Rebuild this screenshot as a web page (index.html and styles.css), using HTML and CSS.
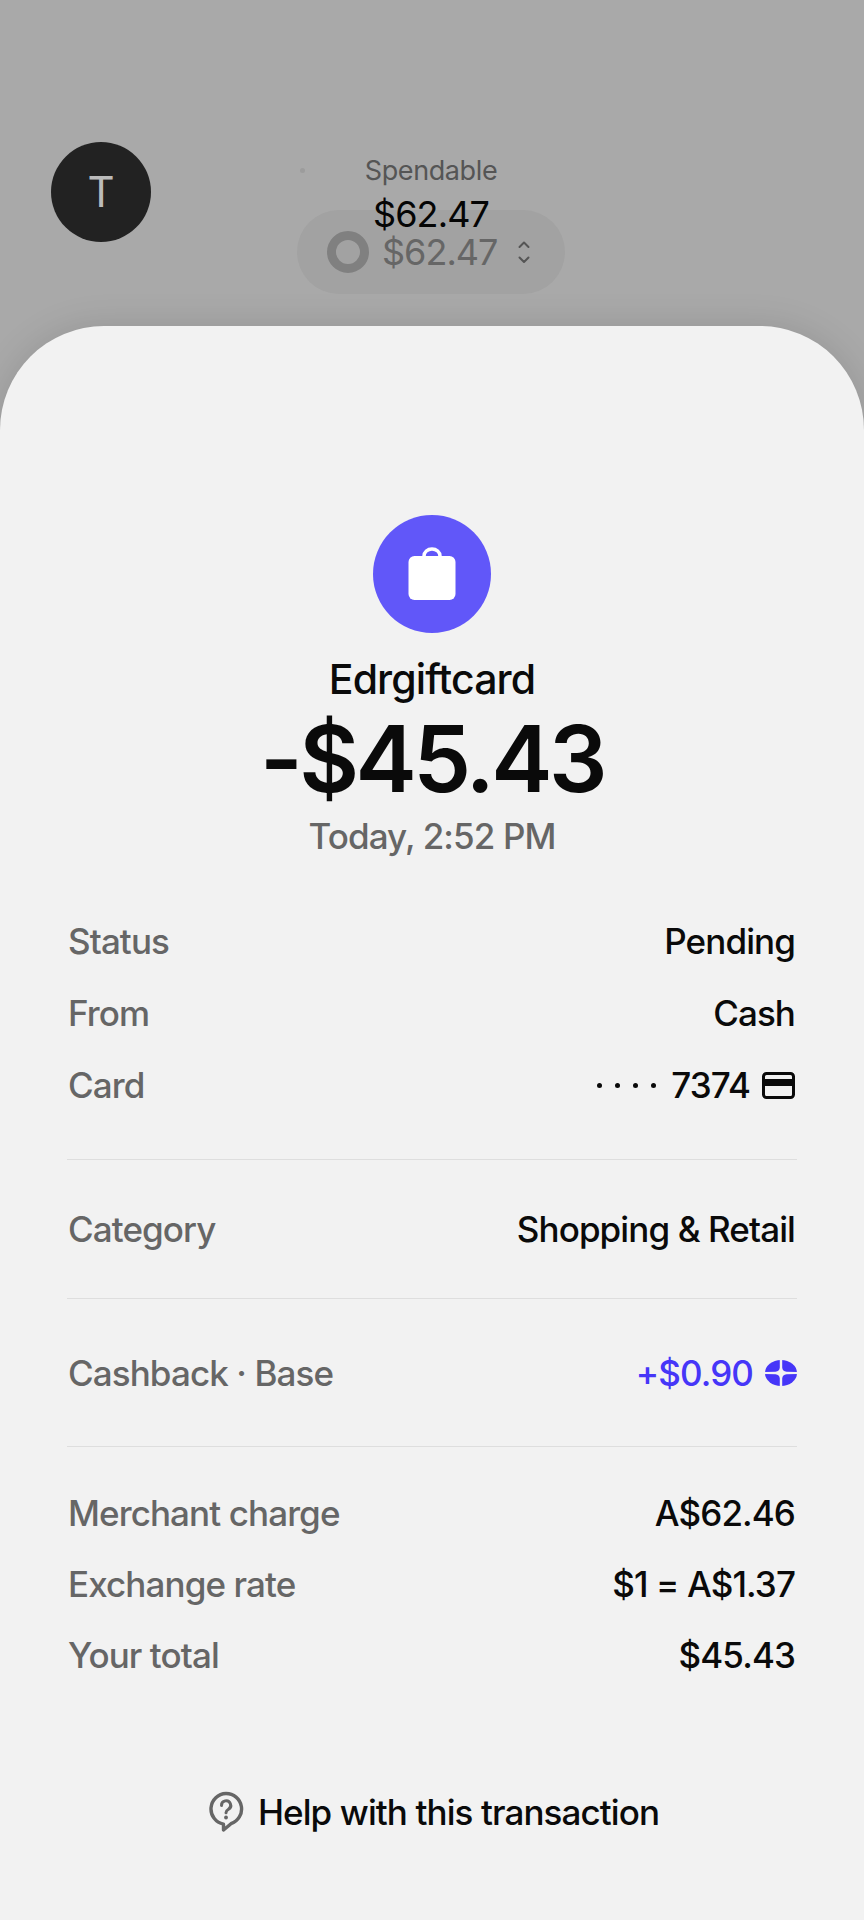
FILE: index.html
```html
<!DOCTYPE html>
<html lang="en">
  <head>
    <meta charset="UTF-8" />
    <meta name="viewport" content="width=device-width, initial-scale=1.0" />
    <title>Transaction</title>
    <link rel="stylesheet" href="styles.css">
  </head>
  <body>
    <header class="top">
      <div class="avatar">T</div>
      <div class="balance">
        <span class="speck"></span>
        <div class="balance-label">Spendable</div>
        <div class="balance-value">$62.47</div>
        <div class="pill">
          <span class="ring"></span>
          <span class="pill-value">$62.47</span>
          <svg class="chevrons" viewBox="0 0 12 24" fill="none" stroke="#555" stroke-width="2" stroke-linecap="round" stroke-linejoin="round">
            <path d="M1.5 7 6 2.5 10.5 7" />
            <path d="M1.5 17.5 6 22 10.5 17.5" />
          </svg>
        </div>
      </div>
    </header>

    <main class="sheet">
      <section class="hero">
        <div class="merchant-icon">
          <svg width="48" height="54" viewBox="0 0 48 54">
            <path fill="none" stroke="#fff" stroke-width="3.5" d="M16 10V9a8 7 0 0 1 16 0v1" />
            <rect x="0.5" y="9" width="47" height="44" rx="6" fill="#fff" />
          </svg>
        </div>
        <div class="merchant">Edrgiftcard</div>
        <div class="amount">-$45.43</div>
        <div class="when">Today, 2:52 PM</div>
      </section>

      <section class="group group-a">
        <div class="row"><span class="label">Status</span><span class="value">Pending</span></div>
        <div class="row"><span class="label">From</span><span class="value">Cash</span></div>
        <div class="row">
          <span class="label">Card</span>
          <span class="value card-value">
            <span class="dots"><i></i><i></i><i></i><i></i></span>
            <span>7374</span>
            <svg width="33" height="27" viewBox="0 0 33 27">
              <rect x="1.5" y="1.5" width="30" height="24" rx="3" fill="none" stroke="#0a0a0a" stroke-width="3" />
              <rect x="2" y="7" width="29" height="7" fill="#0a0a0a" />
            </svg>
          </span>
        </div>
      </section>

      <section class="group group-b">
        <div class="row"><span class="label">Category</span><span class="value">Shopping &amp; Retail</span></div>
      </section>

      <section class="group group-c">
        <div class="row">
          <span class="label">Cashback · Base</span>
          <span class="value cashback">
            <span>+$0.90</span>
            <svg width="32" height="26" viewBox="0 0 32 26">
              <ellipse cx="16" cy="13" rx="16" ry="13" fill="#4636f8" />
              <path fill="#f2f2f2" d="M14.800 0h2.400v7.500q.3 3.800 4.300 4.300l10.500.1v2.200l-10.500.1q-4 .5-4.300 4.300V26h-2.400v-7.500q-.3-3.800-4.300-4.300L0 14.100v-2.200l10.500-.1q4-.5 4.300-4.300z" />
            </svg>
          </span>
        </div>
      </section>

      <section class="group group-d">
        <div class="row"><span class="label">Merchant charge</span><span class="value">A$62.46</span></div>
        <div class="row"><span class="label">Exchange rate</span><span class="value">$1 = A$1.37</span></div>
        <div class="row"><span class="label">Your total</span><span class="value">$45.43</span></div>
      </section>

      <div class="help">
        <svg width="36" height="42" viewBox="0 0 36 42" fill="none">
          <path stroke="#666" stroke-width="3.4" stroke-linejoin="round" d="M18 2.500a15.500 15.500 0 0 1 5 30.200L15.500 39v-5.800A15.500 15.500 0 0 1 18 2.500z" />
          <path stroke="#666" stroke-width="3" stroke-linecap="round" d="M13.500 14.500a4.600 4.600 0 1 1 7 3.800c-1.600 1-2.500 1.900-2.500 3.400" />
          <circle cx="18" cy="26.500" r="1.900" fill="#666" />
        </svg>
        <span>Help with this transaction</span>
      </div>
    </main>
  </body>
</html>
```

FILE: styles.css
```css
* {
  box-sizing: border-box;
}
html,
body {
  margin: 0;
  padding: 0;
}
body {
  width: 864px;
  height: 1920px;
  overflow: hidden;
  background-color: #a9a9a9;
  font-family: Inter, "Liberation Sans", sans-serif;
  color: #0a0a0a;
}

/* dimmed header behind the sheet */
.top {
  height: 326px;
  padding: 142px 0 0 51px;
  display: grid;
  grid-template-columns: 246px 268px 1fr;
  align-items: start;
}
.avatar {
  width: 100px;
  height: 100px;
  border-radius: 50%;
  background-color: #222;
  color: #bbb;
  font-size: 42px;
  line-height: 100px;
  text-align: center;
}
.balance {
  position: relative;
  display: flex;
  flex-direction: column;
  align-items: center;
  padding-top: 13px;
}
.speck {
  position: absolute;
  left: 3px;
  top: 26px;
  width: 5px;
  height: 5px;
  border-radius: 50%;
  background-color: #9c9c9c;
}
.balance-label {
  font-size: 27px;
  line-height: 32px;
  letter-spacing: -0.4px;
  color: #555;
}
.balance-value {
  position: relative;
  z-index: 1;
  margin-top: 5px;
  font-size: 36px;
  line-height: 44px;
  letter-spacing: -0.9px;
  color: #050505;
}
.pill {
  width: 268px;
  height: 84px;
  margin-top: -26px;
  padding-left: 30px;
  display: flex;
  align-items: center;
  border-radius: 42px;
  background-color: #a2a2a2;
}
.ring {
  width: 42px;
  height: 42px;
  border: 9px solid #808080;
  border-radius: 50%;
}
.pill-value {
  margin-left: 13px;
  font-size: 36px;
  letter-spacing: -1px;
  color: #666;
}
.chevrons {
  width: 12px;
  height: 24px;
  margin-left: 21px;
}

/* transaction sheet */
.sheet {
  height: 1594px;
  padding: 0 67px;
  background-color: #f2f2f2;
  border-radius: 104px 104px 0 0;
  box-shadow: 0 0 36px rgba(0, 0, 0, 0.12);
}
.hero {
  padding-top: 189px;
  display: flex;
  flex-direction: column;
  align-items: center;
}
.merchant-icon {
  width: 118px;
  height: 118px;
  display: flex;
  align-items: center;
  justify-content: center;
  border-radius: 50%;
  background-color: #6157f9;
}
.merchant {
  margin-top: 22px;
  font-size: 41px;
  font-weight: 500;
  line-height: 48px;
  letter-spacing: -0.9px;
}
.amount {
  margin-top: 6px;
  font-size: 92px;
  line-height: 100px;
  font-weight: 600;
  letter-spacing: -3.5px;
}
.when {
  margin-top: 6px;
  font-size: 35px;
  font-weight: 500;
  line-height: 42px;
  letter-spacing: -0.9px;
  color: #666;
}
.group {
  border-bottom: 1px solid #dedede;
}
.group-a {
  margin-top: 48px;
  padding-bottom: 38px;
}
.group-b {
  padding: 33px 0;
}
.group-c {
  padding: 38px 0 37px;
}
.group-d {
  padding-top: 30px;
  border-bottom: none;
}
.group-d .row {
  height: 71px;
}
.row {
  height: 72px;
  padding: 0 2px 0 1px;
  display: flex;
  align-items: center;
  justify-content: space-between;
  font-size: 35px;
  font-weight: 500;
  letter-spacing: -0.9px;
}
.label {
  color: #666;
}
.card-value,
.cashback {
  display: flex;
  align-items: center;
  gap: 12px;
}
.cashback svg {
  margin-right: -2px;
}
.cashback {
  color: #4636f8;
}
.dots {
  display: flex;
  gap: 13px;
  margin-right: 3px;
}
.dots i {
  width: 5px;
  height: 5px;
  border-radius: 50%;
  background-color: #0a0a0a;
}
.help {
  margin-top: 101px;
  padding-left: 3px;
  display: flex;
  align-items: center;
  justify-content: center;
  gap: 14px;
  font-size: 35px;
  font-weight: 500;
  letter-spacing: -0.9px;
}
```
